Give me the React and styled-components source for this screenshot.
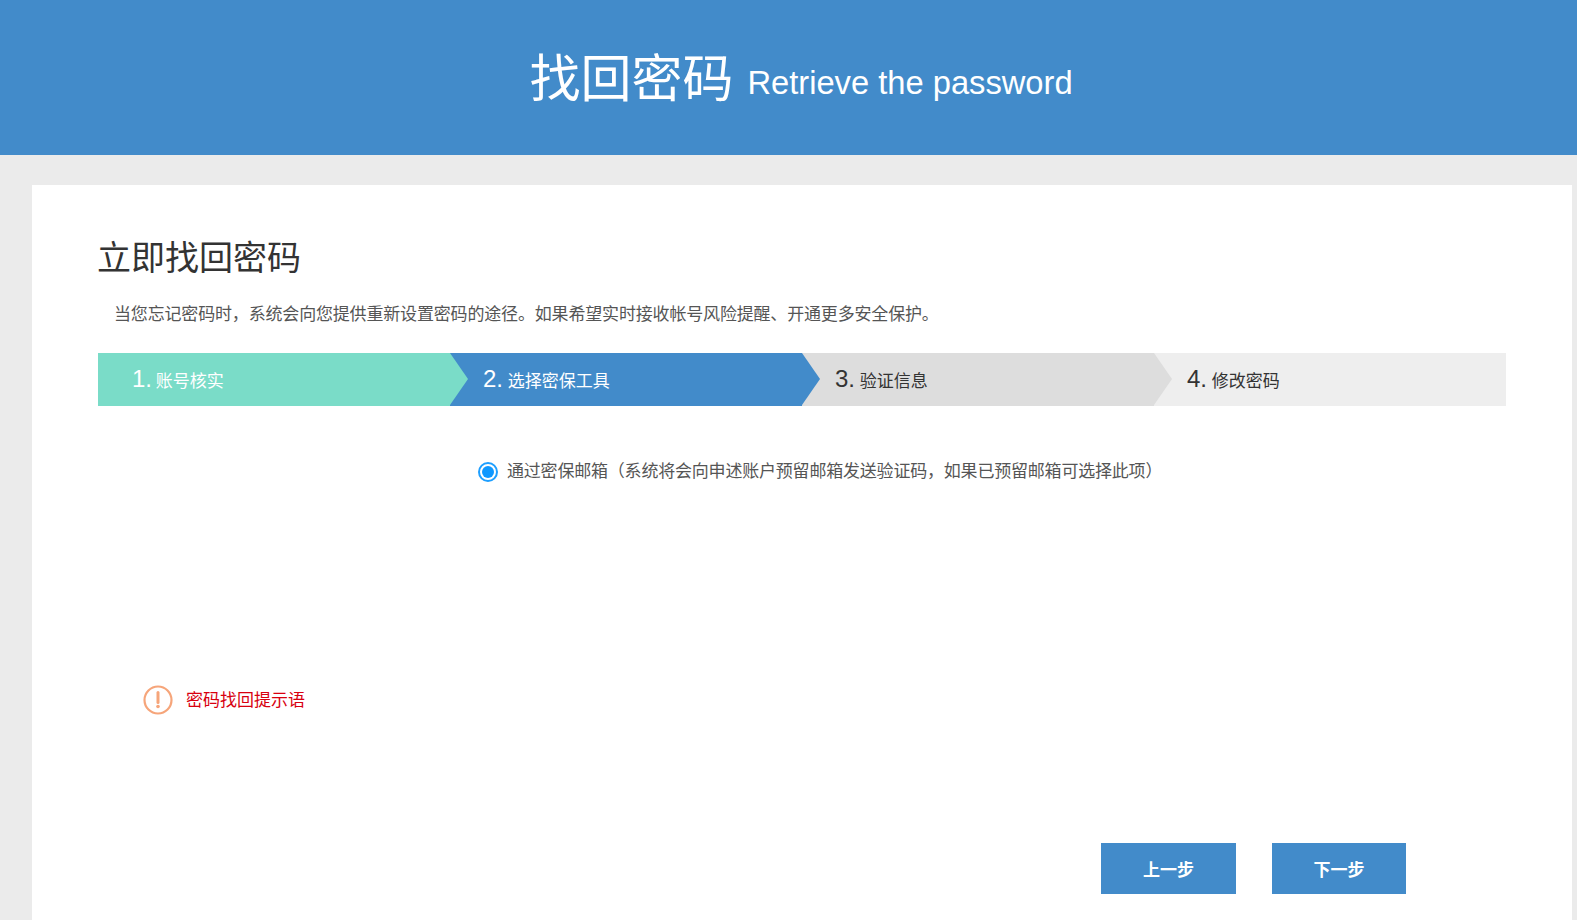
import React from "react";
import styled, { createGlobalStyle } from "styled-components";

const Global = createGlobalStyle`
  html, body { margin: 0; padding: 0; height: 920px; overflow: hidden; background: #ebebeb; }
  body { font-family: "Liberation Sans", "Noto Sans CJK SC", sans-serif; }
  * { box-sizing: border-box; }
`;
const Banner = styled.header`
  height: 155px; background: #428bca; color: #fff;
  display: flex; justify-content: center; align-items: center; gap: 14px; padding: 0 0 0 25px;
`;
const BannerTitle = styled.h1`
  margin: 0; font-size: 51px; font-weight: 400; line-height: 1; position: relative; top: 2px;
`;
const BannerSub = styled.span`
  font-size: 32.7px; line-height: 1; padding-top: 12px;
`;
const Card = styled.main`
  margin: 30px 5px 0 32px; height: 735px; background: #fff; padding: 50px 66px 0;
`;
const Heading = styled.h2`
  margin: 0 0 0 -1px; font-size: 34px; font-weight: 400; line-height: 46px; color: #333;
`;
const Desc = styled.p`
  margin: 22px 0 0; padding-left: 16px; font-size: 17px; letter-spacing: -0.17px; line-height: 24px; color: #555;
`;
const Steps = styled.ol`
  list-style: none; margin: 26px 0 0; padding: 0; display: flex; width: 1408px; height: 53px; background: #eee;
`;
const Step = styled.li`
  position: relative; width: 352px; height: 53px; padding-left: ${p => p.$pad}px;
  background: ${p => p.$bg}; color: ${p => p.$fg};
  z-index: ${p => p.$z};
  display: flex; align-items: baseline; line-height: 51px;
  &::after {
    content: ${p => (p.$last ? "none" : '""')};
    position: absolute; left: 100%; top: 0; width: 0; height: 0;
    border-style: solid; border-width: 26.5px 0 26.5px 18px;
    border-color: transparent transparent transparent ${p => p.$bg};
  }
`;
const StepNum = styled.span`font-size: 24px;`;
const StepLabel = styled.span`font-size: 17px; margin-left: ${p => p.$shift || 0}px;`;
const Options = styled.div`
  margin-top: 52px; padding-left: 380px; display: flex; align-items: center; gap: 9px; height: 28px;
`;
const Radio = styled.span`
  width: 20px; height: 20px; border-radius: 50%; border: 2px solid #1e9fff; padding: 2px; flex: none;
  &::before { content: ""; display: block; width: 12px; height: 12px; border-radius: 50%; background: #0f98ff; }
`;
const OptionText = styled.label`font-size: 17px; letter-spacing: -0.2px; line-height: 28px; color: #555; white-space: nowrap;`;
const Tip = styled.div`
  margin-top: 198px; padding-left: 45px; display: flex; align-items: center; gap: 13px; height: 32px;
`;
const TipText = styled.span`font-size: 17px; color: #d8000f; position: relative; top: -2px;`;
const Actions = styled.div`
  margin-top: 127px; padding-left: 1003px; display: flex; gap: 36px;
`;
const Button = styled.button`
  width: ${p => p.$w}px; height: 51px; border: 0; background: #428bca; color: #fff; padding: 0;
  font-family: inherit; font-size: 17px; font-weight: 700;
`;

export default function App() {
  return (
    <>
      <Global />
      <Banner>
        <BannerTitle>找回密码</BannerTitle>
        <BannerSub>Retrieve the password</BannerSub>
      </Banner>
      <Card>
        <Heading>立即找回密码</Heading>
        <Desc>当您忘记密码时，系统会向您提供重新设置密码的途径。如果希望实时接收帐号风险提醒、开通更多安全保护。</Desc>
        <Steps>
          <Step $bg="#7adcc8" $fg="#fff" $z={4} $pad={34}><StepNum>1.</StepNum><StepLabel $shift={-1}>&nbsp;账号核实</StepLabel></Step>
          <Step $bg="#428bca" $fg="#fff" $z={3} $pad={33}><StepNum>2.</StepNum><StepLabel>&nbsp;选择密保工具</StepLabel></Step>
          <Step $bg="#ddd" $fg="#333" $z={2} $pad={33}><StepNum>3.</StepNum><StepLabel>&nbsp;验证信息</StepLabel></Step>
          <Step $bg="#eee" $fg="#333" $z={1} $pad={33} $last><StepNum>4.</StepNum><StepLabel>&nbsp;修改密码</StepLabel></Step>
        </Steps>
        <Options>
          <Radio />
          <OptionText>通过密保邮箱（系统将会向申述账户预留邮箱发送验证码，如果已预留邮箱可选择此项）</OptionText>
        </Options>
        <Tip>
          <svg width="30" height="30" viewBox="0 0 30 30" fill="none" aria-hidden="true">
            <circle cx="15" cy="15" r="13.5" stroke="#f6a57a" strokeWidth="2.2" />
            <path d="M15 7.5v10" stroke="#f6a57a" strokeWidth="3" strokeLinecap="round" />
            <circle cx="15" cy="21.5" r="1.8" fill="#f6a57a" />
          </svg>
          <TipText>密码找回提示语</TipText>
        </Tip>
        <Actions>
          <Button $w={135}>上一步</Button>
          <Button $w={134}>下一步</Button>
        </Actions>
      </Card>
    </>
  );
}
